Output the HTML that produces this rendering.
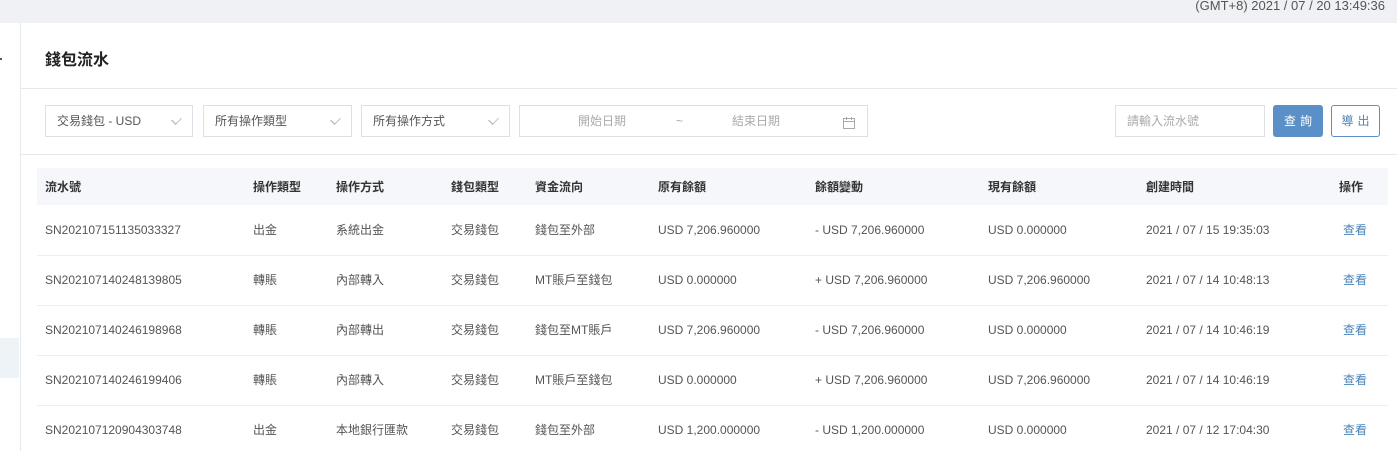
<!DOCTYPE html>
<html><head><meta charset="utf-8"><style>
*{margin:0;padding:0;box-sizing:border-box}
body{width:1397px;height:451px;overflow:hidden;background:#fff;font-family:"Liberation Sans","Noto Sans CJK TC",sans-serif;font-size:12px;color:#555;position:relative}
.top{position:absolute;left:0;top:0;width:1397px;height:23px;background:#f0f1f4}
.time{position:absolute;right:12px;top:-2px;font-size:13px;color:#555}
.side{position:absolute;left:20px;top:23px;width:1px;height:428px;background:#e6e8eb}
.hl{position:absolute;left:0;top:338px;width:19px;height:40px;background:#eef3f8}
.dot{position:absolute;left:0;top:58px;width:2px;height:2px;background:#555}
.title{position:absolute;left:45px;top:46px;font-size:16px;font-weight:bold;color:#222}
.hr{position:absolute;left:21px;width:1376px;height:1px;background:#e8e8e8}
.box{position:absolute;top:105px;height:32px;border:1px solid #dcdfe6;background:#fff;line-height:30px;padding-left:11px;color:#555;font-size:12px}
.arr{position:absolute;right:12px;top:10px;width:7px;height:7px;border-right:1px solid #bbb;border-bottom:1px solid #bbb;transform:rotate(45deg) scale(.9,1.3)}
.btn{position:absolute;top:105px;height:32px;border-radius:3px;line-height:32px;text-align:center;font-size:12px;letter-spacing:4px;text-indent:4px}
.thead{position:absolute;left:37px;top:168px;width:1351px;height:37px;background:#f5f7fa}
.c{position:absolute;white-space:nowrap;line-height:16px;height:16px}
.c *{vertical-align:top}
.h{font-weight:bold;color:#333}
.rl{position:absolute;left:37px;width:1351px;height:1px;background:#ebeef2}
.v{color:#4a84b8}
.r .c{top:0}
</style></head><body>
<div class="top"><span class="time">(GMT+8) 2021 / 07 / 20 13:49:36</span></div>
<div class="side"></div><div class="hl"></div><div class="dot"></div>
<div class="title">錢包流水</div>
<div class="hr" style="top:88px"></div>
<div class="hr" style="top:154px"></div>
<div class="box" style="left:45px;width:148px">交易錢包 - USD<span class="arr"></span></div>
<div class="box" style="left:203px;width:149px">所有操作類型<span class="arr"></span></div>
<div class="box" style="left:361px;width:149px">所有操作方式<span class="arr"></span></div>
<div class="box" style="left:519px;width:349px;color:#aaa;padding:0"><span class="c" style="left:58px;top:7px">開始日期</span><span class="c" style="left:156px;top:7px">~</span><span class="c" style="left:212px;top:7px">結束日期</span>
<svg class="c" style="left:323px;top:9px" width="12" height="12" viewBox="0 0 12 12"><rect x="0.5" y="1.5" width="11" height="10" fill="none" stroke="#aaa"/><line x1="0.5" y1="4.5" x2="11.5" y2="4.5" stroke="#aaa"/><line x1="3.5" y1="0" x2="3.5" y2="3" stroke="#aaa"/><line x1="8.5" y1="0" x2="8.5" y2="3" stroke="#aaa"/></svg></div>
<div class="box" style="left:1115px;width:150px;color:#aaa">請輸入流水號</div>
<div class="btn" style="left:1273px;width:50px;background:#5b8fc7;color:#fff">查詢</div>
<div class="btn" style="left:1331px;width:49px;border:1px solid #5b8fc7;color:#4a84b8;line-height:30px">導出</div>
<div class="thead"></div>
<div class="c h" style="left:45px;top:179px">流水號</div>
<div class="c h" style="left:253px;top:179px">操作類型</div>
<div class="c h" style="left:336px;top:179px">操作方式</div>
<div class="c h" style="left:451px;top:179px">錢包類型</div>
<div class="c h" style="left:535px;top:179px">資金流向</div>
<div class="c h" style="left:658px;top:179px">原有餘額</div>
<div class="c h" style="left:815px;top:179px">餘額變動</div>
<div class="c h" style="left:988px;top:179px">現有餘額</div>
<div class="c h" style="left:1146px;top:179px">創建時間</div>
<div class="c h" style="left:1339px;top:179px">操作</div>
<div class="rl" style="top:255px"></div><div class="rl" style="top:305px"></div><div class="rl" style="top:355px"></div><div class="rl" style="top:405px"></div>
<div class="r" style="position:absolute;left:0;top:222px">
<div class="c" style="left:45px">SN202107151135033327</div><div class="c" style="left:253px">出金</div><div class="c" style="left:336px">系統出金</div><div class="c" style="left:451px">交易錢包</div><div class="c" style="left:535px">錢包至外部</div><div class="c" style="left:658px">USD 7,206.960000</div><div class="c" style="left:815px">- USD 7,206.960000</div><div class="c" style="left:988px">USD 0.000000</div><div class="c" style="left:1146px">2021 / 07 / 15 19:35:03</div><div class="c v" style="left:1343px">查看</div></div>
<div class="r" style="position:absolute;left:0;top:272px">
<div class="c" style="left:45px">SN202107140248139805</div><div class="c" style="left:253px">轉賬</div><div class="c" style="left:336px">內部轉入</div><div class="c" style="left:451px">交易錢包</div><div class="c" style="left:535px">MT賬戶至錢包</div><div class="c" style="left:658px">USD 0.000000</div><div class="c" style="left:815px">+ USD 7,206.960000</div><div class="c" style="left:988px">USD 7,206.960000</div><div class="c" style="left:1146px">2021 / 07 / 14 10:48:13</div><div class="c v" style="left:1343px">查看</div></div>
<div class="r" style="position:absolute;left:0;top:322px">
<div class="c" style="left:45px">SN202107140246198968</div><div class="c" style="left:253px">轉賬</div><div class="c" style="left:336px">內部轉出</div><div class="c" style="left:451px">交易錢包</div><div class="c" style="left:535px">錢包至MT賬戶</div><div class="c" style="left:658px">USD 7,206.960000</div><div class="c" style="left:815px">- USD 7,206.960000</div><div class="c" style="left:988px">USD 0.000000</div><div class="c" style="left:1146px">2021 / 07 / 14 10:46:19</div><div class="c v" style="left:1343px">查看</div></div>
<div class="r" style="position:absolute;left:0;top:372px">
<div class="c" style="left:45px">SN202107140246199406</div><div class="c" style="left:253px">轉賬</div><div class="c" style="left:336px">內部轉入</div><div class="c" style="left:451px">交易錢包</div><div class="c" style="left:535px">MT賬戶至錢包</div><div class="c" style="left:658px">USD 0.000000</div><div class="c" style="left:815px">+ USD 7,206.960000</div><div class="c" style="left:988px">USD 7,206.960000</div><div class="c" style="left:1146px">2021 / 07 / 14 10:46:19</div><div class="c v" style="left:1343px">查看</div></div>
<div class="r" style="position:absolute;left:0;top:422px">
<div class="c" style="left:45px">SN202107120904303748</div><div class="c" style="left:253px">出金</div><div class="c" style="left:336px">本地銀行匯款</div><div class="c" style="left:451px">交易錢包</div><div class="c" style="left:535px">錢包至外部</div><div class="c" style="left:658px">USD 1,200.000000</div><div class="c" style="left:815px">- USD 1,200.000000</div><div class="c" style="left:988px">USD 0.000000</div><div class="c" style="left:1146px">2021 / 07 / 12 17:04:30</div><div class="c v" style="left:1343px">查看</div></div>
</body></html>
